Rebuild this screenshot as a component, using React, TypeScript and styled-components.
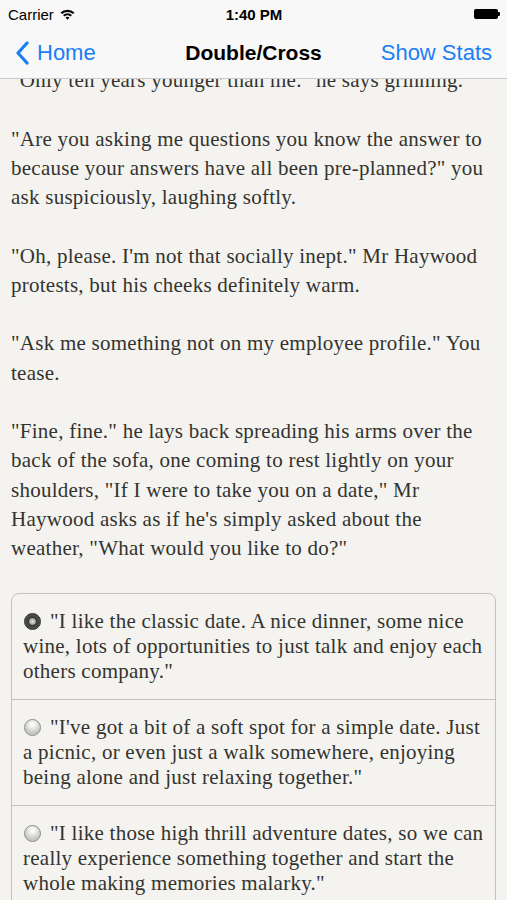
import React from "react";
import styled, { createGlobalStyle } from "styled-components";

const GlobalStyle = createGlobalStyle`
    html, body {
        margin: 0;
        padding: 0;
        background: #f5f3ef;
    }
`;

const Screen = styled.div`
    width: 507px;
    height: 900px;
    display: flex;
    flex-direction: column;
    overflow: hidden;
    background: #f5f3ef;
`;

const TopBar = styled.div`
    position: relative;
    z-index: 2;
    background: #f8f8f8;
    border-bottom: 1px solid #c9c9c9;
    flex-shrink: 0;
`;

const StatusBar = styled.div`
    height: 28px;
    display: grid;
    grid-template-columns: 1fr auto 1fr;
    align-items: center;
    padding: 0 7px 0 8px;
    font-family: "Liberation Sans", Arial, sans-serif;
    font-size: 15px;
    color: #000;
`;

const Carrier = styled.div`
    display: flex;
    align-items: center;
    gap: 6px;
`;

const Clock = styled.div`
    font-weight: bold;
    font-size: 15px;
`;

const Battery = styled.div`
    justify-self: end;
    display: flex;
    align-items: center;
`;

const BatteryBody = styled.div`
    width: 24px;
    height: 10px;
    background: #000;
    border-radius: 2px;
`;

const BatteryNub = styled.div`
    width: 2px;
    height: 4px;
    background: #000;
    border-radius: 0 1px 1px 0;
`;

const NavBar = styled.div`
    height: 49px;
    display: grid;
    grid-template-columns: 1fr auto 1fr;
    align-items: center;
    padding: 0 15px 1px 15px;
    font-family: "Liberation Sans", Arial, sans-serif;
    font-size: 22px;
`;

const BackButton = styled.div`
    display: flex;
    align-items: center;
    gap: 8px;
    color: #1a7ef5;
`;

const Title = styled.div`
    font-weight: bold;
    font-size: 21px;
    color: #000;
`;

const RightButton = styled.div`
    justify-self: end;
    color: #1a7ef5;
`;

const Story = styled.div`
    flex: 1;
    overflow: hidden;
    padding: 0 11px;
    font-family: "Palatino Linotype", "Book Antiqua", Palatino, "Liberation Serif", serif;
    font-size: 21px;
    letter-spacing: 0.25px;
    color: #333330;
`;

const Passage = styled.div`
    margin-top: -13px;
    line-height: 29.25px;
`;

const Para = styled.p`
    margin: 0 0 29.25px;
    white-space: nowrap;
`;

const Choices = styled.div`
    margin-top: 4px;
    border: 1.5px solid #c4c2bf;
    border-radius: 8px;
    overflow: hidden;
`;

const Choice = styled.div`
    padding: 15px 10px 15px 11px;
    line-height: 25px;
    white-space: nowrap;
    &:not(:first-child) {
        border-top: 1.5px solid #c4c2bf;
    }
`;

const Radio = styled.span<{ checked?: boolean }>`
    display: inline-block;
    box-sizing: border-box;
    width: 17px;
    height: 17px;
    margin: 0 9px 0 1px;
    vertical-align: -2px;
    border-radius: 50%;
    border: 1px solid ${({ checked }) => (checked ? "#2a2a2a" : "#8c8c8c")};
    background: ${({ checked }) =>
        checked
            ? "radial-gradient(circle at 50% 50%, #e4e4e4 0, #aaaaaa 2.8px, #3a3a3a 4px, #575757 8px)"
            : "radial-gradient(circle at 50% 30%, #ffffff 0, #f0f0f0 3px, #c6c6c6 8.5px)"};
`;

const passage = [
    ["\"Only ten years younger than me.\" he says grinning."],
    [
        "\"Are you asking me questions you know the answer to",
        "because your answers have all been pre-planned?\" you",
        "ask suspiciously, laughing softly.",
    ],
    [
        "\"Oh, please. I'm not that socially inept.\" Mr Haywood",
        "protests, but his cheeks definitely warm.",
    ],
    ["\"Ask me something not on my employee profile.\" You", "tease."],
    [
        "\"Fine, fine.\" he lays back spreading his arms over the",
        "back of the sofa, one coming to rest lightly on your",
        "shoulders, \"If I were to take you on a date,\" Mr",
        "Haywood asks as if he's simply asked about the",
        "weather, \"What would you like to do?\"",
    ],
];

const choices = [
    [
        "\"I like the classic date. A nice dinner, some nice",
        "wine, lots of opportunities to just talk and enjoy each",
        "others company.\"",
    ],
    [
        "\"I've got a bit of a soft spot for a simple date. Just",
        "a picnic, or even just a walk somewhere, enjoying",
        "being alone and just relaxing together.\"",
    ],
    [
        "\"I like those high thrill adventure dates, so we can",
        "really experience something together and start the",
        "whole making memories malarky.\"",
    ],
];

const Lines: React.FC<{ lines: string[] }> = ({ lines }) => (
    <>
        {lines.map((line, i) => (
            <React.Fragment key={i}>
                {i > 0 && <br />}
                {line}
            </React.Fragment>
        ))}
    </>
);

const App: React.FC = () => (
    <Screen>
        <GlobalStyle />
        <TopBar>
            <StatusBar>
                <Carrier>
                    Carrier
                    <svg width="15" height="11" viewBox="0 0 15 11">
                        <path d="M0.5 3.6 A10 10 0 0 1 14.5 3.6 L13 5.1 A8 8 0 0 0 2 5.1 Z" fill="#000" />
                        <path d="M3 6.1 A6.5 6.5 0 0 1 12 6.1 L10.5 7.6 A4.4 4.4 0 0 0 4.5 7.6 Z" fill="#000" />
                        <path d="M5.5 8.6 A3 3 0 0 1 9.5 8.6 L7.5 10.8 Z" fill="#000" />
                    </svg>
                </Carrier>
                <Clock>1:40 PM</Clock>
                <Battery>
                    <BatteryBody />
                    <BatteryNub />
                </Battery>
            </StatusBar>
            <NavBar>
                <BackButton>
                    <svg width="14" height="24" viewBox="0 0 14 24">
                        <path d="M12 2 L3 12 L12 22" fill="none" stroke="#1a7ef5" strokeWidth="3.2" strokeLinecap="round" strokeLinejoin="round" />
                    </svg>
                    Home
                </BackButton>
                <Title>Double/Cross</Title>
                <RightButton>Show Stats</RightButton>
            </NavBar>
        </TopBar>
        <Story>
            <Passage>
                {passage.map((lines, i) => (
                    <Para key={i}>
                        <Lines lines={lines} />
                    </Para>
                ))}
            </Passage>
            <Choices>
                {choices.map((lines, i) => (
                    <Choice key={i}>
                        <Radio checked={i === 0} />
                        <Lines lines={lines} />
                    </Choice>
                ))}
            </Choices>
        </Story>
    </Screen>
);

export default App;
